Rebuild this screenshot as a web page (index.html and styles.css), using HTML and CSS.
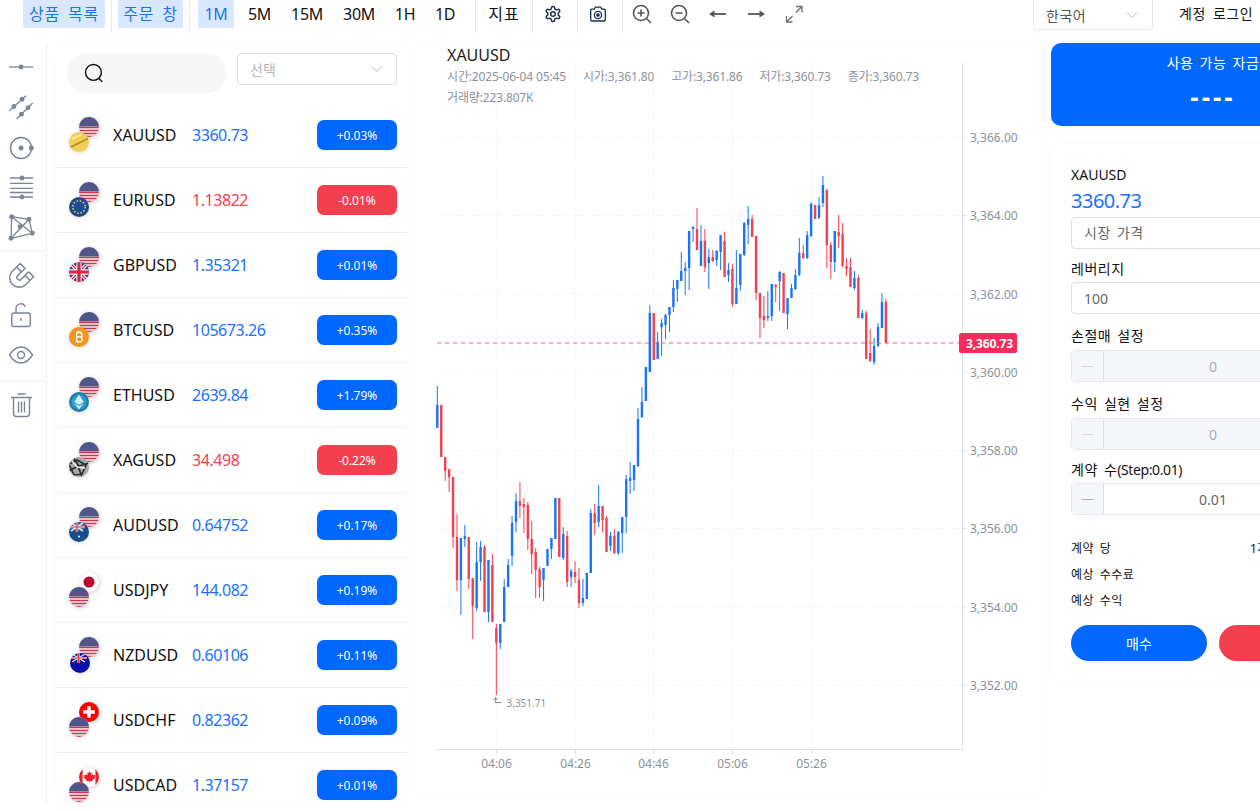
FILE: index.html
```html
<!DOCTYPE html>
<html lang="ko">
<head>
<meta charset="utf-8">
<title>XAUUSD</title>
<link rel="stylesheet" href="styles.css">
</head>
<body>
<svg class="defs" width="0" height="0" aria-hidden="true">
  <defs>
    <clipPath id="disc"><circle cx="10" cy="10" r="10"/></clipPath>
    <symbol id="us" viewBox="0 0 20 20"><g clip-path="url(#disc)">
      <rect width="20" height="20" fill="#f4f0f1"/>
      <path d="M0 1.5h20M0 4.5h20M0 7.5h20M0 10.5h20M0 13.5h20M0 16.5h20M0 19.5h20" stroke="#c8394e" stroke-width="1.5"/>
      <rect width="20" height="9.5" fill="#4f568a"/>
    </g></symbol>
    <symbol id="gold" viewBox="0 0 20 20"><g clip-path="url(#disc)">
      <rect width="20" height="20" fill="#f2cf55"/>
      <path d="M0 16 20 6" stroke="#b78e26" stroke-width="1.6"/>
      <path d="M3 7 12 3" stroke="#fbe69a" stroke-width="2"/>
    </g></symbol>
    <symbol id="eu" viewBox="0 0 20 20"><g clip-path="url(#disc)">
      <rect width="20" height="20" fill="#1c4b93"/>
      <circle cx="10" cy="10" r="6.2" fill="none" stroke="#f2d13c" stroke-width="1.5" stroke-dasharray="1.5 1.75"/>
    </g></symbol>
    <symbol id="gb" viewBox="0 0 20 20"><g clip-path="url(#disc)">
      <rect width="20" height="20" fill="#2b3f86"/>
      <path d="M0 0 20 20M20 0 0 20" stroke="#f3f3f5" stroke-width="3.4"/>
      <path d="M0 0 20 20M20 0 0 20" stroke="#d8243e" stroke-width="1.2"/>
      <path d="M10 0v20M0 10h20" stroke="#f3f3f5" stroke-width="5.4"/>
      <path d="M10 0v20M0 10h20" stroke="#d8243e" stroke-width="3.2"/>
    </g></symbol>
    <symbol id="au" viewBox="0 0 20 20"><g clip-path="url(#disc)">
      <rect width="20" height="20" fill="#174e87"/>
      <path d="M2 1 14 9M14 1 2 9" stroke="#e8e6ee" stroke-width="1.6"/>
      <path d="M8 0v10M0 5h16" stroke="#e8e6ee" stroke-width="2.4"/>
      <path d="M8 0v10M0 5h16" stroke="#d6354d" stroke-width="1.2"/>
      <circle cx="10" cy="14.5" r="1" fill="#fff"/>
    </g></symbol>
    <symbol id="nz" viewBox="0 0 20 20"><g clip-path="url(#disc)">
      <rect width="20" height="20" fill="#0a0fa8"/>
      <path d="M2 1 15 9M15 1 2 9" stroke="#e8e6ee" stroke-width="1.4"/>
      <path d="M8.5 0v10M0 5h17" stroke="#e8e6ee" stroke-width="2.2"/>
      <path d="M8.5 0v10M0 5h17" stroke="#d6354d" stroke-width="1.1"/>
    </g></symbol>
    <symbol id="btc" viewBox="0 0 20 20">
      <circle cx="10" cy="10" r="10" fill="#f7931a"/>
      <path d="M7.6 5.5h3.3a2.2 2.2 0 0 1 0 4.4H7.6h3.9a2.4 2.4 0 0 1 0 4.7H7.6zM9 4v2M11 4v2M9 14v2M11 14v2" fill="none" stroke="#fff" stroke-width="1.4"/>
    </symbol>
    <symbol id="eth" viewBox="0 0 20 20">
      <circle cx="10" cy="10" r="10" fill="#1d7ea8"/>
      <circle cx="10" cy="10" r="7.6" fill="#2f9ec6"/>
      <path d="M10 2.5 14.8 10 10 12.8 5.2 10z" fill="#cfeef8"/>
      <path d="M10 14 14.4 11.4 10 17.5 5.6 11.4z" fill="#e6f7fc"/>
    </symbol>
    <symbol id="xag" viewBox="0 0 20 20"><g clip-path="url(#disc)">
      <rect width="20" height="20" fill="#a8a8aa"/>
      <path d="M0 7 8 3l9 5-4 9-8 1zM4 0l6 9 10-3M0 14l9-5 4 11" fill="none" stroke="#2a2a2c" stroke-width="1.6"/>
      <path d="M3 4l5 6 8 1" fill="none" stroke="#ececec" stroke-width="1.4"/>
    </g></symbol>
    <symbol id="jp" viewBox="0 0 20 20">
      <circle cx="10" cy="10" r="10" fill="#fff"/>
      <circle cx="10" cy="10" r="5.6" fill="#bc0a2e"/>
    </symbol>
    <symbol id="ch" viewBox="0 0 20 20">
      <circle cx="10" cy="10" r="10" fill="#fe0000"/>
      <path d="M10 4.2v11.6M4.2 10h11.6" stroke="#fff" stroke-width="3.4"/>
    </symbol>
    <symbol id="ca" viewBox="0 0 20 20"><g clip-path="url(#disc)">
      <rect width="20" height="20" fill="#fff"/>
      <rect width="3.6" height="20" fill="#e8202c"/>
      <rect x="16.4" width="3.6" height="20" fill="#e8202c"/>
      <path d="M10 3.6 11.3 6l1.4-.7-.5 3.3 1.6-1.6.5 1.2 2-.3-.7 2 .9.5-3.1 2.6.4 1.3-3-.4V16h-.6v-2.1l-3 .4.4-1.3-3.1-2.6.9-.5-.7-2 2 .3.5-1.2 1.6 1.6-.5-3.3 1.4.7z" fill="#e8202c"/>
    </g></symbol>
  </defs>
</svg>

<header class="topbar">
  <button class="tab tab-list">상품 목록</button>
  <i class="sep sep-a"></i>
  <button class="tab tab-order">주문 창</button>
  <i class="sep sep-a"></i>
  <div class="frames">
    <button class="tf w-1m active">1M</button>
    <button class="tf w-1m">5M</button>
    <button class="tf w-15">15M</button>
    <button class="tf w-30">30M</button>
    <button class="tf w-1h">1H</button>
    <button class="tf w-1h">1D</button>
  </div>
  <i class="sep sep-b"></i>
  <button class="plain">지표</button>
  <i class="sep"></i>
  <button class="ticon">
    <svg width="18" height="18" viewBox="0 0 24 24" fill="none" stroke="#1f2f50" stroke-width="2"><path d="M12.22 2h-.44a2 2 0 0 0-2 2v.18a2 2 0 0 1-1 1.73l-.43.25a2 2 0 0 1-2 0l-.15-.08a2 2 0 0 0-2.73.73l-.22.38a2 2 0 0 0 .73 2.73l.15.1a2 2 0 0 1 1 1.72v.51a2 2 0 0 1-1 1.74l-.15.09a2 2 0 0 0-.73 2.73l.22.38a2 2 0 0 0 2.73.73l.15-.08a2 2 0 0 1 2 0l.43.25a2 2 0 0 1 1 1.73V20a2 2 0 0 0 2 2h.44a2 2 0 0 0 2-2v-.18a2 2 0 0 1 1-1.73l.43-.25a2 2 0 0 1 2 0l.15.08a2 2 0 0 0 2.73-.73l.22-.39a2 2 0 0 0-.73-2.73l-.15-.08a2 2 0 0 1-1-1.74v-.5a2 2 0 0 1 1-1.74l.15-.09a2 2 0 0 0 .73-2.73l-.22-.38a2 2 0 0 0-2.73-.73l-.15.08a2 2 0 0 1-2 0l-.43-.25a2 2 0 0 1-1-1.73V4a2 2 0 0 0-2-2z"/><circle cx="12" cy="12" r="3"/></svg>
  </button>
  <i class="sep"></i>
  <button class="ticon">
    <svg width="18" height="18" viewBox="0 0 18 18" fill="none" stroke="#1f2f50" stroke-width="1.3"><path d="M1.7 5.2a1 1 0 0 1 1-1h2.6l1-2h5.4l1 2h2.6a1 1 0 0 1 1 1V15a1 1 0 0 1-1 1H2.7a1 1 0 0 1-1-1z"/><circle cx="9" cy="10" r="3.6"/><circle cx="9" cy="10" r="1.2" fill="#1f2f50"/></svg>
  </button>
  <i class="sep"></i>
  <div class="tools">
    <svg width="20" height="20" viewBox="0 0 20 20" fill="none" stroke="#555" stroke-width="1.6"><circle cx="9" cy="9" r="7.5"/><path d="M14.5 14.5 19 19M5.5 9h7M9 5.5v7"/></svg>
    <svg width="20" height="20" viewBox="0 0 20 20" fill="none" stroke="#555" stroke-width="1.6"><circle cx="9" cy="9" r="7.5"/><path d="M14.5 14.5 19 19M5.5 9h7"/></svg>
    <svg width="20" height="20" viewBox="0 0 20 20" fill="none"><path d="M5 10h13" stroke="#555" stroke-width="1.8"/><path d="M1 10 6.5 6.5v7z" fill="#555"/></svg>
    <svg width="20" height="20" viewBox="0 0 20 20" fill="none"><path d="M2 10h13" stroke="#555" stroke-width="1.8"/><path d="M19 10 13.5 6.5v7z" fill="#555"/></svg>
    <svg width="20" height="20" viewBox="0 0 20 20" fill="none" stroke="#6b6f76" stroke-width="1.3"><path d="M12 2.500h6v6M18 2.500 12 8.500M2.500 12v6h6M2.500 18 8.500 12"/></svg>
  </div>
  <div class="lang ko">한국어
    <svg width="12" height="12" viewBox="0 0 12 12" fill="none" stroke="#b4b8c0" stroke-width="1"><path d="M1 3.500 6 8.500 11 3.500"/></svg>
  </div>
  <button class="login ko">계정 로그인</button>
</header>

<main class="layout">
  <nav class="toolbar">
    <div class="tgroup first">
      <button class="tool"><svg width="30" height="30" viewBox="0 0 30 30" fill="none" stroke="#7c8596" stroke-width="1.3"><path d="M3 15h24"/><circle cx="15" cy="15" r="1.800" fill="#7c8596"/></svg></button>
      <button class="tool"><svg width="30" height="30" viewBox="0 0 30 30" fill="none" stroke="#7c8596" stroke-width="1.3"><path d="M3.300 18.700 20 3.700M10.700 27 26.700 11"/><g fill="#7c8596"><circle cx="8" cy="14.500" r="1.800"/><circle cx="16" cy="7.300" r="1.800"/><circle cx="15.500" cy="22.200" r="1.800"/><circle cx="22" cy="15.700" r="1.800"/></g></svg></button>
      <button class="tool"><svg width="30" height="30" viewBox="0 0 30 30" fill="none" stroke="#7c8596" stroke-width="1.4"><circle cx="15" cy="16" r="10.500"/><circle cx="15" cy="16" r="1.800" fill="#7c8596"/><circle cx="25.300" cy="16" r="1.800" fill="#7c8596"/></svg></button>
      <button class="tool"><svg width="30" height="30" viewBox="0 0 30 30" fill="none" stroke="#7c8596" stroke-width="1.3"><path d="M4 6h23M4 11.300h23M4 16.300h23M4 20.500h23M4 25h23"/><circle cx="16" cy="6" r="1.800" fill="#7c8596"/><circle cx="16" cy="25" r="1.800" fill="#7c8596"/></svg></button>
      <button class="tool"><svg width="30" height="30" viewBox="0 0 30 30" fill="none" stroke="#7c8596" stroke-width="1.3"><path d="M5.700 4.700 23 7.300 26.300 21.300 5 26.300zM5.700 4.700 26.300 21.300M23 7.300 5 26.300"/><g fill="#7c8596"><circle cx="5.700" cy="4.700" r="1.800"/><circle cx="23" cy="7.300" r="1.800"/><circle cx="26.300" cy="21.300" r="1.800"/><circle cx="5" cy="26.300" r="1.800"/><circle cx="14" cy="14.700" r="1.800"/></g></svg></button>
    </div>
    <div class="tgroup second">
      <button class="tool"><svg width="29" height="29" viewBox="0 0 24 24" fill="none" stroke="#7c8596" stroke-width="1.200"><g transform="rotate(180 12 12)"><path d="m6 15-4-4 6.750-6.770a7.790 7.790 0 0 1 11 11L13 22l-4-4 6.390-6.360a2.140 2.140 0 0 0-3-3L6 15"/><path d="m5 8 4 4M12 15l4 4"/></g></svg></button>
      <button class="tool"><svg width="26" height="26" viewBox="0 0 26 26" fill="none" stroke="#7c8596" stroke-width="1.400"><rect x="3.800" y="11" width="18.500" height="13.500" rx="2"/><path d="M8 11V6.500a4.800 4.800 0 0 1 9.200-1.800"/><path d="M13 16v3"/></svg></button>
      <button class="tool"><svg width="26" height="26" viewBox="0 0 26 26" fill="none" stroke="#7c8596" stroke-width="1.400"><path d="M1.500 13C5 7.500 9 5 13 5s8 2.500 11.500 8C21 18.500 17 21 13 21S5 18.500 1.500 13z"/><circle cx="13" cy="13" r="3.500"/></svg></button>
    </div>
    <div class="tgroup third">
      <button class="tool"><svg width="26" height="26" viewBox="0 0 26 26" fill="none" stroke="#7c8596" stroke-width="1.400"><path d="M3 5.500h21M9.500 2h8M5.500 5.500v16a3 3 0 0 0 3 3h10a3 3 0 0 0 3-3v-16M10.500 9.500v11M13.500 9.500v11M16.500 9.500v11"/></svg></button>
    </div>
  </nav>

  <section class="market panel">
    <div class="filters">
      <label class="search"><svg width="22" height="22" viewBox="0 0 20 20" fill="none" stroke="#111" stroke-width="1.300"><circle cx="9.500" cy="9.500" r="7.200"/><path d="M14.500 15 17.500 18"/></svg></label>
      <div class="select"><span>선택</span><svg width="12" height="12" viewBox="0 0 12 12" fill="none" stroke="#b4b8c0" stroke-width="1"><path d="M1 3.500 6 8.500 11 3.500"/></svg></div>
    </div>
    <div class="rows">
      <div class="row"><span class="pair"><svg class="flag hi"><use href="#us"/></svg><svg class="flag lo"><use href="#gold"/></svg></span><b class="sym">XAUUSD</b><span class="price up">3360.73</span><span class="chg bg-up">+0.03%</span></div>
      <div class="row"><span class="pair"><svg class="flag hi"><use href="#us"/></svg><svg class="flag lo"><use href="#eu"/></svg></span><b class="sym">EURUSD</b><span class="price down">1.13822</span><span class="chg bg-down">-0.01%</span></div>
      <div class="row"><span class="pair"><svg class="flag hi"><use href="#us"/></svg><svg class="flag lo"><use href="#gb"/></svg></span><b class="sym">GBPUSD</b><span class="price up">1.35321</span><span class="chg bg-up">+0.01%</span></div>
      <div class="row"><span class="pair"><svg class="flag hi"><use href="#us"/></svg><svg class="flag lo"><use href="#btc"/></svg></span><b class="sym">BTCUSD</b><span class="price up">105673.26</span><span class="chg bg-up">+0.35%</span></div>
      <div class="row"><span class="pair"><svg class="flag hi"><use href="#us"/></svg><svg class="flag lo"><use href="#eth"/></svg></span><b class="sym">ETHUSD</b><span class="price up">2639.84</span><span class="chg bg-up">+1.79%</span></div>
      <div class="row"><span class="pair"><svg class="flag hi"><use href="#us"/></svg><svg class="flag lo"><use href="#xag"/></svg></span><b class="sym">XAGUSD</b><span class="price down">34.498</span><span class="chg bg-down">-0.22%</span></div>
      <div class="row"><span class="pair"><svg class="flag hi"><use href="#us"/></svg><svg class="flag lo"><use href="#au"/></svg></span><b class="sym">AUDUSD</b><span class="price up">0.64752</span><span class="chg bg-up">+0.17%</span></div>
      <div class="row"><span class="pair"><svg class="flag hi"><use href="#jp"/></svg><svg class="flag lo"><use href="#us"/></svg></span><b class="sym">USDJPY</b><span class="price up">144.082</span><span class="chg bg-up">+0.19%</span></div>
      <div class="row"><span class="pair"><svg class="flag hi"><use href="#us"/></svg><svg class="flag lo nudge"><use href="#nz"/></svg></span><b class="sym">NZDUSD</b><span class="price up">0.60106</span><span class="chg bg-up">+0.11%</span></div>
      <div class="row"><span class="pair"><svg class="flag hi"><use href="#ch"/></svg><svg class="flag lo"><use href="#us"/></svg></span><b class="sym">USDCHF</b><span class="price up">0.82362</span><span class="chg bg-up">+0.09%</span></div>
      <div class="row"><span class="pair"><svg class="flag hi"><use href="#ca"/></svg><svg class="flag lo"><use href="#us"/></svg></span><b class="sym">USDCAD</b><span class="price up">1.37157</span><span class="chg bg-up">+0.01%</span></div>
    </div>
  </section>

  <section class="chart panel">
    <svg class="plot" width="624" height="752" viewBox="417 43 624 752">
      <g class="grid">
        <path d="M437 137.500H962M437 215.500H962M437 294H962M437 372H962M437 450.500H962M437 528.500H962M437 607H962M437 685.500H962"/>
        <path d="M496.500 63V749M575.500 63V749M653.500 63V749M732.500 63V749M811.500 63V749"/>
      </g>
      <g id="candles"></g>
      <path class="axis" d="M437 749.500H963M962.500 63V750"/>
      <path class="axis" d="M963 137.500h4M963 215.500h4M963 294h4M963 372h4M963 450.500h4M963 528.500h4M963 607h4M963 685.500h4M496.500 750v4M575.500 750v4M653.500 750v4M732.500 750v4M811.500 750v4"/>
      <path class="last" d="M437 343H960"/>
      <g class="ylab">
        <text x="970" y="142">3,366.00</text><text x="970" y="220">3,364.00</text>
        <text x="970" y="299">3,362.00</text><text x="970" y="377">3,360.00</text>
        <text x="970" y="455">3,358.00</text><text x="970" y="533">3,356.00</text>
        <text x="970" y="612">3,354.00</text><text x="970" y="690">3,352.00</text>
      </g>
      <g class="xlab">
        <text x="496.500" y="768">04:06</text><text x="575.500" y="768">04:26</text>
        <text x="653.500" y="768">04:46</text><text x="732.500" y="768">05:06</text>
        <text x="811.500" y="768">05:26</text>
      </g>
      <rect class="tag" x="959" y="333" width="58" height="20"/>
      <text class="tagtext" x="989.500" y="348">3,360.73</text>
      <path class="minmark" d="M495.500 703V698M493.500 700l2-2.500 2 2.500M495.500 702.500h6"/>
      <text class="minlab" x="506.500" y="707">3,351.71</text>
    </svg>
    <div class="legend">
      <h2>XAUUSD</h2>
      <p><span>시간:2025-06-04 05:45</span><span>시가:3,361.80</span><span>고가:3,361.86</span><span>저가:3,360.73</span><span>종가:3,360.73</span></p>
      <p><span>거래량:223.807K</span></p>
    </div>
  </section>

  <aside class="side">
    <div class="funds panel-blue">
      <div class="funds-label ko">사용 가능 자금</div>
      <div class="funds-value">----</div>
    </div>
    <form class="order panel">
      <div class="o-sym">XAUUSD</div>
      <div class="o-price">3360.73</div>
      <div class="field ko">시장 가격</div>
      <div class="o-label short ko">레버리지</div>
      <div class="field val">100</div>
      <div class="o-label ko">손절매 설정</div>
      <div class="num off"><span class="minus">—</span><span class="numval">0</span></div>
      <div class="o-label ko">수익 실현 설정</div>
      <div class="num off"><span class="minus">—</span><span class="numval">0</span></div>
      <div class="o-label short"><span class="ko">계약 수</span><span class="step">(Step:0.01)</span></div>
      <div class="num"><span class="minus">—</span><span class="numval">0.01</span></div>
      <div class="stats">
        <div class="stat ko"><span>계약 당</span><span class="stat-wide">1계약=100 oz</span></div>
        <div class="stat ko"><span>예상 수수료</span><span>--</span></div>
        <div class="stat ko"><span>예상 수익</span><span>--</span></div>
      </div>
      <div class="actions">
        <button type="button" class="act buy">매수</button>
        <button type="button" class="act sell">매도</button>
      </div>
    </form>
  </aside>
</main>
<script src="script.js"></script>
</body>
</html>
```
FILE: styles.css
```css
* { box-sizing: border-box; }
html, body { margin: 0; height: 100%; overflow: hidden; background: #fff; }
body {
  width: 1400px;
  font-family: "Noto Sans", "Noto Sans CJK KR", sans-serif;
  font-size: 14px;
  color: #111;
}
button { font: inherit; color: inherit; background: none; border: 0; padding: 0; }
.defs { position: absolute; }
.ko { letter-spacing: .5px; word-spacing: 2px; }

.topbar { display: flex; align-items: flex-start; height: 43px; padding-left: 23px; font-size: 16px; }
.tab {
  height: 28px; border-radius: 2px; letter-spacing: .8px; word-spacing: 3px;
  background: #d9e8ff; color: #1d72f0; line-height: 27px; white-space: nowrap;
}
.tab-list { width: 82px; }
.tab-order { width: 65px; }
.sep { width: 1px; height: 33px; background: #e8eaef; flex: none; }
.sep-a { margin: 0 6px; }
.sep-a + .frames { margin-left: 2px; }
.frames { display: flex; gap: 6px; }
.tf { height: 28px; line-height: 28px; border-radius: 2px; letter-spacing: -.3px; }
.w-1m { width: 37px; }
.w-15 { width: 46px; }
.w-30 { width: 46px; }
.w-1h { width: 34px; }
.tf.active { width: 36px; margin-right: 1px; background: #d9e8ff; color: #1d72f0; }
.sep-b { margin-left: 13px; }
.plain { width: 32px; height: 28px; line-height: 28px; margin: 0 12px; letter-spacing: 1px; white-space: nowrap; }
.ticon { width: 18px; height: 28px; margin: 0 15px 0 11px; display: flex; align-items: center; justify-content: center; }
.tools { display: flex; gap: 18px; margin-left: 9px; padding-top: 4px; }
.lang {
  display: flex; align-items: center; justify-content: space-between;
  width: 120px; height: 30px; margin-left: 229px; padding: 0 14px 0 12px;
  border: 1px solid #e4e7ed; border-top: 0; border-radius: 0 0 4px 4px;
  font-size: 14px; color: #555;
}
.login { margin-left: 26px; font-size: 14px; height: 28px; line-height: 28px; white-space: nowrap; word-spacing: 3px; }

.layout { display: flex; align-items: flex-start; height: 760px; }
.panel { background: #fff; border-radius: 10px; box-shadow: 0 0 10px rgba(0, 0, 0, .025); }

.toolbar { width: 47px; height: 760px; border-right: 1px solid #eceef1; flex: none; margin-right: 10px; }
.tgroup { border-bottom: 1px solid #eceef1; }
.tgroup.first { padding: 4px 0; height: 209px; }
.tgroup.second { padding: 3px 0 5px; height: 129px; }
.tgroup.third { padding-top: 4px; border-bottom: 0; }
.tool { display: flex; align-items: center; justify-content: center; width: 42px; height: 40px; }

.market { width: 350px; height: 760px; flex: none; overflow: hidden; }
.filters { display: flex; gap: 10px; padding: 10px; height: 60px; }
.search { display: flex; align-items: center; width: 160px; height: 40px; padding-left: 16px; border-radius: 20px; background: #f7f7f7; }
.select {
  display: flex; align-items: center; justify-content: space-between;
  width: 160px; height: 32px; padding: 0 13px 0 12px;
  border: 1px solid #dcdfe6; border-radius: 4px; color: #b5b8bf;
}
.row { display: flex; align-items: center; height: 65px; padding: 0 10px 0 12px; border-bottom: 1px solid #eeeeee; }
.pair { position: relative; width: 32px; height: 36px; flex: none; margin-right: 12px; }
.flag { position: absolute; width: 20px; height: 20px; }
.flag.hi { left: 10px; top: 0; filter: drop-shadow(1px 1px 2px rgba(0, 0, 0, .2)); }
.flag.lo { left: 0; top: 15px; filter: drop-shadow(0 1px 2px rgba(0, 0, 0, .15)); }
.flag.lo.nudge { left: 1px; top: 16px; }
.sym { width: 79px; font-weight: 400; font-size: 16px; flex: none; }
.price { font-size: 16px; letter-spacing: -.45px; }
.up { color: #1c6fff; }
.down { color: #f5414f; }
.chg {
  width: 80px; height: 30px; margin-left: auto; line-height: 31px; text-align: center;
  border-radius: 7px; color: #fff; font-size: 12px;
}
.bg-up { background: #0068ff; }
.bg-down { background: #f43f4e; }

.chart { position: relative; width: 624px; height: 752px; margin: 0 10px; flex: none; }
.plot { display: block; }
.grid path { fill: none; stroke: #f2f3f5; stroke-width: 1; stroke-dasharray: 2 3; }
.axis { fill: none; stroke: #dcdfe4; stroke-width: 1; }
.last { fill: none; stroke: #ff5a80; stroke-width: 1.2; stroke-dasharray: 4 4; }
.ylab text, .xlab text, .minlab {
  font-family: "Noto Sans", sans-serif; font-size: 12px; fill: #8c919c;
}
.xlab text { text-anchor: middle; }
.minlab { font-size: 10px; }
.minmark { fill: none; stroke: #8c919c; stroke-width: 1; }
.tag { fill: #fd2b5c; rx: 2px; }
.tagtext { font-family: "Noto Sans", sans-serif; font-size: 12px; font-weight: 700; fill: #fff; text-anchor: middle; letter-spacing: -.1px; }
.legend { position: absolute; left: 30px; top: 0; color: #8c919c; font-size: 12px; letter-spacing: -.15px; }
.legend h2 { margin: 0; padding-top: 1px; font-size: 16px; font-weight: 400; color: #222; line-height: 22px; letter-spacing: 0; }
.legend p { display: flex; gap: 17px; margin: 0; line-height: 21px; white-space: nowrap; }

.side { width: 324px; flex: none; }
.panel-blue { height: 83px; border-radius: 10px; background: #0068ff; color: #fff; text-align: center; margin-bottom: 18px; }
.funds-label { padding-top: 10px; line-height: 20px; font-size: 14px; }
.funds-value { margin-top: 11px; font-size: 26px; font-weight: 700; line-height: 26px; letter-spacing: 3px; }
.order { height: 538px; padding: 21px 20px 0; }
.o-sym { font-size: 14px; line-height: 20px; }
.o-price { font-size: 20px; line-height: 26px; margin-top: 3px; color: #1c6fff; letter-spacing: -.5px; }
.field {
  height: 32px; margin-top: 3px; padding-left: 12px; line-height: 30px;
  border: 1px solid #dcdfe6; border-radius: 4px; color: #666; font-size: 14px;
}
.field.val { margin-top: 0; line-height: 32px; }
.o-label { margin-top: 12px; line-height: 20px; height: 24px; }
.o-label.short { margin-top: 10px; height: 23px; }
.step { letter-spacing: -.4px; }
.num { display: flex; height: 32px; border: 1px solid #e4e7ed; border-radius: 4px; color: #666; }
.minus { width: 32px; background: #f5f7fa; border-right: 1px solid #dcdfe6; color: #a8abb2; text-align: center; line-height: 30px; font-size: 12px; flex: none; }
.numval { flex: 1; text-align: center; line-height: 32px; padding-right: 32px; font-size: 14px; }
.num.off { background: #f5f7fa; color: #a8abb2; }
.num.off .minus { color: #d5d7dc; }
.stats { margin-top: 21px; }
.stat { display: flex; justify-content: space-between; height: 26px; line-height: 26px; font-size: 12px; }
.stat-wide { width: 105px; white-space: nowrap; }
.actions { display: flex; gap: 12px; margin-top: 11px; }
.act { flex: 1; height: 36px; border-radius: 18px; color: #fff; font-size: 14px; }
.buy { background: #0068ff; }
.sell { background: #f43f4e; }
```
FILE: script.js
```js
var B = 1, R = 0;
var data = [
[386,405,428,428,B],[405,405,457,457,R],[457,457,471,481,R],[469,469,477,492,R],[477,477,537,548,R],
[514,537,580,591,R],[538,538,580,615,B],[525,536,539,547,B],[537,537,579,589,R],[578,578,606,639,R],
[542,562,608,611,B],[541,547,562,581,B],[545,547,612,612,R],[560,560,612,622,B],[554,565,622,622,R],
[624,628,643,695,R],[624,624,643,649,B],[579,587,622,622,B],[559,565,587,587,B],[516,523,556,566,B],
[493,501,522,532,B],[482,501,506,518,R],[498,504,507,533,R],[502,505,539,550,R],[521,539,554,574,R],
[548,552,570,598,R],[567,569,587,598,R],[568,568,580,601,B],[549,549,566,566,B],[538,538,549,559,B],
[498,498,539,539,B],[498,498,557,557,R],[527,534,558,560,B],[531,536,582,587,R],[569,571,577,587,B],
[561,572,577,583,R],[568,580,603,608,R],[579,598,603,606,B],[573,573,599,599,B],[509,513,573,573,B],
[504,513,523,535,R],[485,506,522,527,B],[506,506,520,532,R],[516,518,552,552,R],[532,536,546,551,B],
[529,536,553,554,R],[531,532,553,555,B],[517,517,533,553,B],[475,479,517,533,B],[462,478,481,494,B],
[465,465,480,491,B],[408,419,466,467,B],[387,402,417,418,B],[367,367,401,401,B],[305,313,372,372,B],
[313,313,360,360,R],[332,342,359,359,B],[319,323,327,356,B],[314,315,325,339,B],[307,307,315,332,B],
[280,288,307,312,B],[280,280,289,302,B],[252,271,281,281,B],[262,268,271,295,B],[231,231,268,290,B],
[226,227,229,242,B],[208,229,250,250,R],[225,241,266,266,B],[229,241,267,272,R],[249,257,263,289,B],
[250,257,261,262,R],[250,251,260,266,B],[235,235,252,270,B],[232,241,277,277,R],[263,270,275,282,B],
[264,269,304,307,R],[250,288,304,304,B],[254,254,285,291,B],[222,223,255,256,B],[206,219,225,244,B],
[215,219,237,237,R],[236,236,293,300,R],[293,293,318,338,R],[296,316,320,328,R],[291,316,318,321,B],
[284,284,316,321,B],[284,285,287,302,R],[271,272,281,311,B],[273,273,313,313,R],[298,298,314,329,B],
[284,288,298,298,B],[269,275,289,290,B],[238,253,275,276,B],[245,253,258,259,R],[231,235,258,259,B],
[202,204,236,237,B],[205,205,219,219,R],[197,205,218,219,B],[176,185,203,207,B],[189,190,245,268,R],
[242,245,262,279,R],[231,231,262,272,B],[215,232,236,248,R],[223,234,266,267,R],[258,266,269,276,R],
[258,267,287,287,R],[271,278,288,290,B],[275,278,318,318,R],[310,313,318,319,B],[311,313,359,359,R],
[329,353,361,362,R],[338,346,362,365,B],[323,327,346,347,B],[293,302,328,328,B],[299,302,343,343,R]
];
var NS = "http://www.w3.org/2000/svg";
var layer = document.getElementById("candles");
function bar(x, y, w, h, color) {
  var r = document.createElementNS(NS, "rect");
  r.setAttribute("x", x);
  r.setAttribute("y", y);
  r.setAttribute("width", w);
  r.setAttribute("height", Math.max(h, 1));
  r.setAttribute("fill", color);
  layer.appendChild(r);
}
data.forEach(function (d, i) {
  var x = 437.3 + 3.935 * i;
  var c = d[4] === B ? "#1a73ff" : "#f4404f";
  bar(x - 0.5, d[0], 1, d[3] - d[0], c);
  bar(x - 1.2, d[1], 2.4, d[2] - d[1], c);
});
```
